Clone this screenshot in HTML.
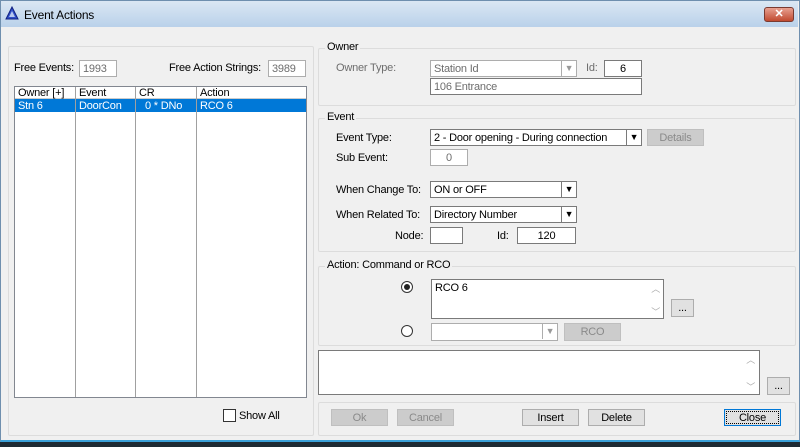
<!DOCTYPE html>
<html><head><style>
*{box-sizing:border-box;margin:0;padding:0}
body{width:800px;height:447px;overflow:hidden;background:#1e2a33;font-family:"Liberation Sans",sans-serif;font-size:11px;letter-spacing:-0.2px;color:#000;position:relative}
.a{position:absolute}
.win{left:0;top:0;width:800px;height:442px;background:#f0f0f0;border:1px solid #6f8fae;border-bottom:2px solid #3aa0d8}
.title{left:1px;top:1px;width:797px;height:26px;background:linear-gradient(#dbe7f3,#b9d1ea)}
.grp{border:1px solid #dcdcdc;border-radius:2px}
.lbl{background:#f0f0f0;padding:0 2px}
.box{background:#fff;border:1px solid #7a7a7a;padding:1px 3px;white-space:nowrap;overflow:hidden;height:17px;line-height:15px}
.dis{color:#6d6d6d}
.dbox{background:#fff;border:1px solid #adadad;color:#6d6d6d;padding:1px 3px;height:17px;line-height:15px}
.btn{background:#e1e1e1;border:1px solid #adadad;text-align:center;line-height:16px;height:17px}
.dbtn{background:#cccccc;border:1px solid #bfbfbf;color:#8a8a8a;text-align:center;line-height:16px;height:17px}
.arr{position:absolute;right:0;top:0;width:15px;height:15px;border-left:1px solid #7a7a7a;text-align:center;font-size:9px;line-height:15px}
.t{margin-top:1px}
</style></head><body>
<div class="a win"></div>
<div class="a title"></div>
<svg class="a" style="left:5px;top:6px" width="14" height="14"><polygon points="7,1 13,13 1,13" fill="#3050c8" stroke="#102080"/><polygon points="7,5 10,11 4,11" fill="#b8c8f0"/></svg>
<div class="a" style="left:24px;top:8px;font-size:12px">Event Actions</div>
<div class="a" style="left:764px;top:7px;width:30px;height:15px;background:linear-gradient(#e8a090,#c04a30);border:1px solid #7a3a30;border-radius:3px;color:#fff;text-align:center;font-weight:bold;font-size:11px;line-height:13px">✕</div>

<!-- left -->
<div class="a grp" style="left:8px;top:46px;width:306px;height:390px"></div>
<div class="a" style="left:14px;top:62px">Free Events:</div>
<div class="a dbox" style="left:79px;top:60px;width:38px">1993</div>
<div class="a" style="left:169px;top:62px">Free Action Strings:</div>
<div class="a dbox" style="left:268px;top:60px;width:38px">3989</div>
<div class="a" style="left:14px;top:86px;width:293px;height:312px;background:#fff;border:1px solid #828790"></div>
<div class="a" style="left:15px;top:87px;width:291px;height:12px;border-bottom:1px solid #ccc"></div>
<div class="a" style="left:15px;top:99px;width:291px;height:13px;background:#0078d7"></div>
<div class="a" style="left:75px;top:87px;width:1px;height:310px;background:#a0a0a0"></div>
<div class="a" style="left:135px;top:87px;width:1px;height:310px;background:#a0a0a0"></div>
<div class="a" style="left:196px;top:87px;width:1px;height:310px;background:#a0a0a0"></div>
<div class="a" style="left:18px;top:87px">Owner [+]</div>
<div class="a" style="left:79px;top:87px">Event</div>
<div class="a" style="left:139px;top:87px">CR</div>
<div class="a" style="left:200px;top:87px">Action</div>
<div class="a" style="left:18px;top:100px;color:#fff">Stn 6</div>
<div class="a" style="left:79px;top:100px;color:#fff">DoorCon</div>
<div class="a" style="left:145px;top:100px;color:#fff">0 * DNo</div>
<div class="a" style="left:200px;top:100px;color:#fff">RCO 6</div>
<div class="a" style="left:223px;top:409px;width:13px;height:13px;background:#fff;border:1px solid #333"></div>
<div class="a" style="left:239px;top:410px">Show All</div>

<!-- owner -->
<div class="a grp" style="left:318px;top:48px;width:478px;height:58px"></div>
<div class="a lbl" style="left:325px;top:41px">Owner</div>
<div class="a dis" style="left:336px;top:62px">Owner Type:</div>
<div class="a dbox" style="left:430px;top:60px;width:147px">Station Id<span class="arr" style="border-color:#adadad;color:#999">▼</span></div>
<div class="a dis" style="left:586px;top:62px">Id:</div>
<div class="a box" style="left:604px;top:60px;width:38px;text-align:center">6</div>
<div class="a box dis" style="left:430px;top:78px;width:212px">106 Entrance</div>

<!-- event -->
<div class="a grp" style="left:318px;top:118px;width:478px;height:134px"></div>
<div class="a lbl" style="left:325px;top:111px">Event</div>
<div class="a" style="left:336px;top:132px">Event Type:</div>
<div class="a box" style="left:430px;top:129px;width:212px">2 - Door opening - During connection<span class="arr">▼</span></div>
<div class="a dbtn" style="left:647px;top:129px;width:57px">Details</div>
<div class="a" style="left:336px;top:152px">Sub Event:</div>
<div class="a dbox" style="left:430px;top:149px;width:38px;text-align:center">0</div>
<div class="a" style="left:336px;top:184px">When Change To:</div>
<div class="a box" style="left:430px;top:181px;width:147px">ON or OFF<span class="arr">▼</span></div>
<div class="a" style="left:336px;top:209px">When Related To:</div>
<div class="a box" style="left:430px;top:206px;width:147px">Directory Number<span class="arr">▼</span></div>
<div class="a" style="left:395px;top:230px">Node:</div>
<div class="a box" style="left:430px;top:227px;width:33px"></div>
<div class="a" style="left:497px;top:230px">Id:</div>
<div class="a box" style="left:517px;top:227px;width:59px;text-align:center">120</div>

<!-- action -->
<div class="a grp" style="left:318px;top:266px;width:478px;height:80px"></div>
<div class="a lbl" style="left:325px;top:259px">Action: Command or RCO</div>
<div class="a" style="left:401px;top:281px;width:12px;height:12px;border:1px solid #333;border-radius:50%;background:#fff"><div class="a" style="left:2px;top:2px;width:6px;height:6px;border-radius:50%;background:#222"></div></div>
<div class="a" style="left:431px;top:279px;width:233px;height:40px;background:#fff;border:1px solid #7a7a7a;padding:2px 3px">RCO 6<span class="a" style="right:3px;top:2px;color:#aaa;font-size:9px">︿</span><span class="a" style="right:3px;top:25px;color:#aaa;font-size:9px">﹀</span></div>
<div class="a btn" style="left:671px;top:299px;width:23px;height:18px">...</div>
<div class="a" style="left:401px;top:325px;width:12px;height:12px;border:1px solid #333;border-radius:50%;background:#fff"></div>
<div class="a dbox" style="left:431px;top:323px;width:127px;height:18px"><span class="arr" style="border-color:#adadad;color:#999">▼</span></div>
<div class="a dbtn" style="left:564px;top:323px;width:57px;height:18px">RCO</div>

<div class="a" style="left:318px;top:350px;width:442px;height:45px;background:#fff;border:1px solid #7a7a7a"><span class="a" style="right:4px;top:2px;color:#aaa;font-size:9px">︿</span><span class="a" style="right:4px;top:29px;color:#aaa;font-size:9px">﹀</span></div>
<div class="a btn" style="left:767px;top:377px;width:23px;height:18px">...</div>

<!-- bottom -->
<div class="a grp" style="left:318px;top:402px;width:478px;height:34px"></div>
<div class="a dbtn" style="left:331px;top:409px;width:57px">Ok</div>
<div class="a dbtn" style="left:397px;top:409px;width:57px">Cancel</div>
<div class="a btn" style="left:522px;top:409px;width:57px">Insert</div>
<div class="a btn" style="left:588px;top:409px;width:57px">Delete</div>
<div class="a btn" style="left:724px;top:409px;width:57px;border:1px solid #0078d7;outline:1px dotted #000;outline-offset:-3px">Close</div>
</body></html>
